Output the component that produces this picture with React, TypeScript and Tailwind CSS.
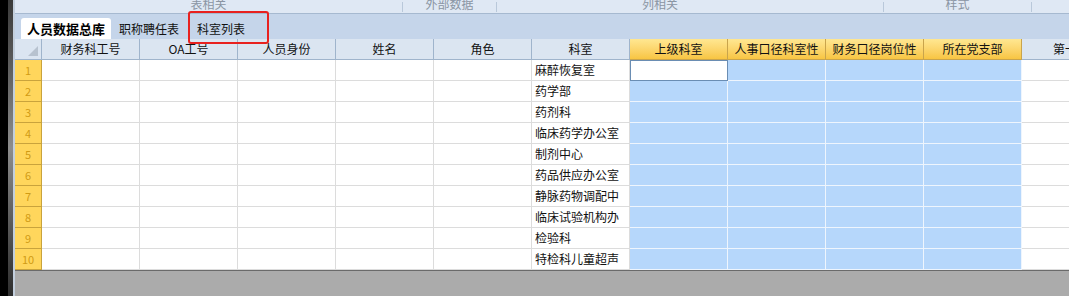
import React from "react";

const headers = ["财务科工号", "OA工号", "人员身份", "姓名", "角色", "科室", "上级科室", "人事口径科室性", "财务口径岗位性", "所在党支部", "第一"];
const depts = ["麻醉恢复室", "药学部", "药剂科", "临床药学办公室", "制剂中心", "药品供应办公室", "静脉药物调配中", "临床试验机构办", "检验科", "特检科儿童超声"];

const groups = [
  { label: "表相关", w: "w-[388px]", pad: "" },
  { label: "外部数据", w: "w-[94px]", pad: "" },
  { label: "列相关", w: "w-[387px]", pad: "pr-[60px]" },
  { label: "样式", w: "w-[148px]", pad: "" },
];

const isSel = (c: number) => c >= 6 && c <= 9;

export default function App() {
  return (
    <div
      className="relative flex w-[1069px] h-[296px] overflow-hidden bg-[#ababab]"
      style={{ fontFamily: '"Noto Sans CJK SC", "Liberation Sans", sans-serif' }}
    >
      {/* left edge */}
      <div className="flex h-full shrink-0">
        <div className="w-[8px] bg-black" />
        <div className="w-[5px] bg-gradient-to-b from-[#3a3a3a] via-[#8d8d8d] to-[#2e2e2e]" />
        <div className="w-[2px] bg-[#c3cfdd]" />
      </div>

      <div className="flex flex-col flex-1 min-w-0">
        {/* ribbon group labels */}
        <div className="flex h-[14px] shrink-0 bg-[#dfe8f4] border-b border-[#a6b9d0] overflow-hidden">
          {groups.map((g, i) => (
            <div key={i} className={`${g.w} ${g.pad} flex justify-center border-r border-[#b9c8da] h-[10px] mt-[2px]`}>
              <span className="text-[12px] leading-[12px] -mt-[4px] text-[#8a95a3]">{g.label}</span>
            </div>
          ))}
        </div>

        {/* sheet tabs */}
        <div className="flex items-end h-[25px] shrink-0 bg-[#c5d5ea] pl-[6px]">
          <div className="h-[21px] px-[6px] flex items-center bg-white rounded-t-[3px] text-[13px] font-bold text-black">
            人员数据总库
          </div>
          <div className="h-[21px] pl-[8px] pr-[8px] flex items-center text-[12px] text-[#111]">职称聘任表</div>
          <div className="h-[21px] px-[10px] flex items-center text-[12px] text-[#111]">科室列表</div>
        </div>

        {/* grid */}
        <div className="grid grid-cols-[27px_repeat(10,98px)_1fr] bg-white border-b border-[#6a6a6a] text-[12px] text-[#111]">
          {/* header row */}
          <div className="relative h-[21px] bg-[#dbe5f1] border-r border-b border-[#9fb4cc]">
            <div className="absolute right-[3px] bottom-[3px] w-0 h-0 border-l-[10px] border-l-transparent border-b-[10px] border-b-[#b7c2cf]" />
          </div>
          {headers.map((h, c) => (
            <div
              key={c}
              className={`h-[21px] flex items-center justify-center border-b overflow-hidden whitespace-nowrap ${
                isSel(c)
                  ? "bg-gradient-to-b from-[#ffe791] to-[#f8c541] border-r border-[#c9a44c]"
                  : "bg-[#dbe5f1] border-r border-[#9fb4cc]"
              } ${c === 10 ? "justify-start pl-[31px] border-r-0" : ""}`}
            >
              {h}
            </div>
          ))}

          {/* body rows */}
          {depts.map((d, r) => (
            <React.Fragment key={r}>
              <div className="h-[21px] flex items-center justify-center bg-[#ffd65c] border-r border-b border-[#c9a33c] text-[11px] text-[#d19b14]">
                {r + 1}
              </div>
              {headers.map((_, c) => {
                const active = r === 0 && c === 6;
                let cls = "border-r border-b border-[#dcdcdc] bg-white";
                if (isSel(c)) cls = "border-r border-b border-[#eef5fd] bg-[#b6d7fb]";
                if (active) cls = "border border-[#6a8db3] bg-white";
                if (c === 10) cls = "border-b border-[#dcdcdc] bg-white";
                return (
                  <div key={c} className={`h-[21px] flex items-center pl-[3px] whitespace-nowrap overflow-hidden ${cls}`}>
                    {c === 5 ? d : ""}
                  </div>
                );
              })}
            </React.Fragment>
          ))}
        </div>
      </div>

      {/* red highlight box */}
      <div className="absolute left-[188px] top-[11px] w-[81px] h-[33px] border-2 border-[#e8211f] rounded-[3px]" />
    </div>
  );
}
